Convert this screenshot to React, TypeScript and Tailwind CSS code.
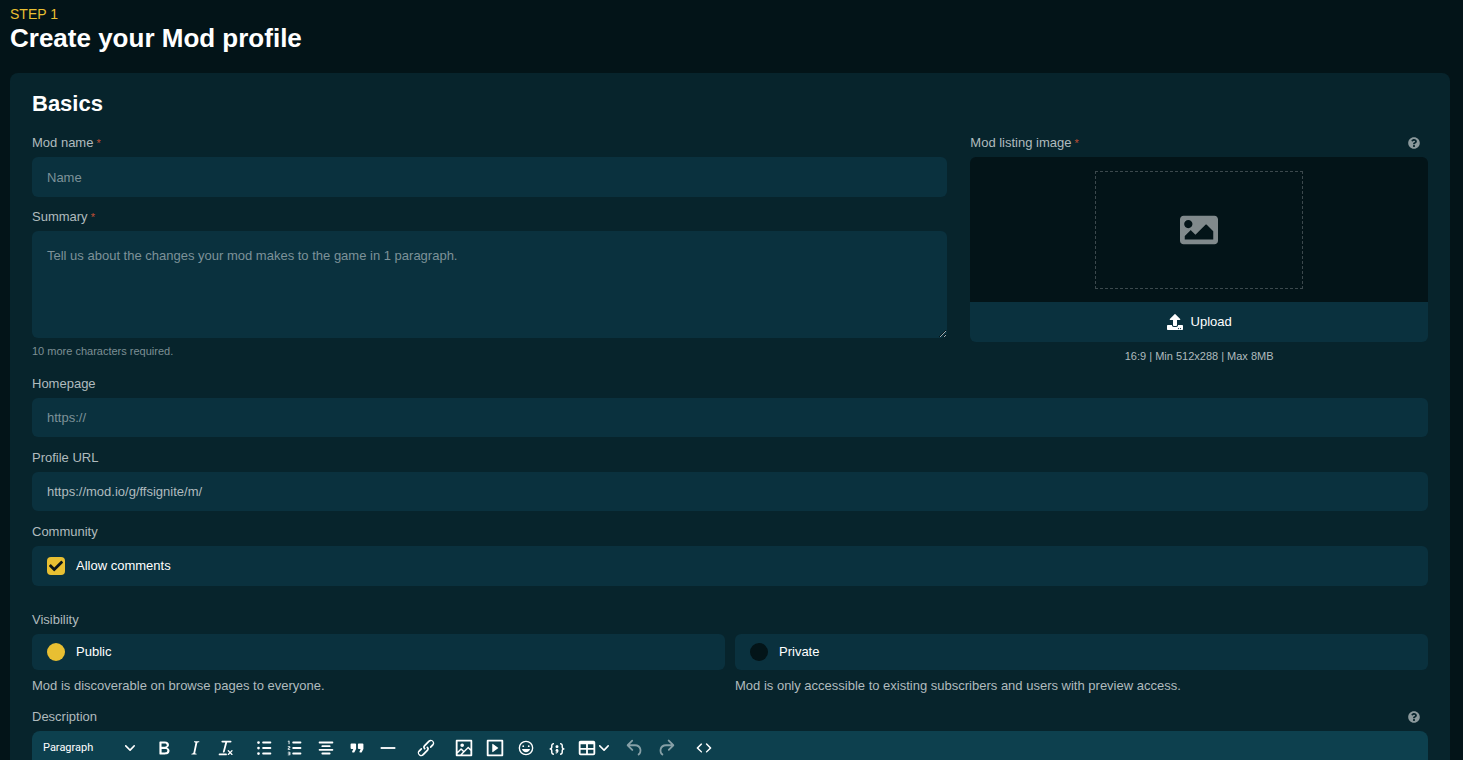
import { useState } from "react";
import type { ReactNode } from "react";
import { FaCheck, FaImage, FaQuestionCircle, FaUpload } from "react-icons/fa";

type Tool = { name: string; path: string; disabled?: boolean };

const textTools: Tool[] = [
    {
        name: "Bold",
        path: "M7.8 19c-.3 0-.5 0-.6-.2l-.2-.5V5.7c0-.2 0-.4.2-.5l.6-.2h5c1.5 0 2.7.3 3.5 1 .7.6 1.1 1.4 1.1 2.5a3 3 0 01-.6 1.9c-.4.6-1 1-1.6 1.2.4.1.9.3 1.3.6s.8.7 1 1.2c.4.4.5 1 .5 1.6 0 1.3-.4 2.3-1.3 3-.8.7-2.1 1-3.8 1H7.8zm5-8.3c.6 0 1.2-.1 1.6-.5.4-.3.6-.7.6-1.3 0-1.1-.8-1.7-2.3-1.7H9.3v3.5h3.4zm.5 6c.7 0 1.3-.1 1.7-.4.4-.4.6-.9.6-1.5s-.2-1-.7-1.4c-.4-.3-1-.4-2-.4H9.4v3.8h4z",
    },
    {
        name: "Italic",
        path: "M16.7 4.7l-.1.9h-.3c-.6 0-1 0-1.4.3-.3.3-.4.6-.5 1.1l-2.1 9.8v.6c0 .5.4.8 1.4.8h.2l-.2.8H8l.2-.8h.2c1.1 0 1.8-.5 2-1.5l2-9.8.1-.5c0-.6-.4-.8-1.4-.8h-.3l.2-.9h5.8z",
    },
    {
        name: "Clear formatting",
        path: "M13.2 6a1 1 0 010 .2l-2.6 10a1 1 0 01-1 .8h-.2a.8.8 0 01-.8-1l2.6-10H8a1 1 0 110-2h9a1 1 0 010 2h-3.8zM5 18h7a1 1 0 010 2H5a1 1 0 010-2zm13 1.5L16.5 18 15 19.5a.7.7 0 01-1-1l1.5-1.5-1.5-1.5a.7.7 0 011-1l1.5 1.5 1.5-1.5a.7.7 0 011 1L17.5 17l1.5 1.5a.7.7 0 01-1 1z",
    },
];

const blockTools: Tool[] = [
    {
        name: "Bullet list",
        path: "M11 5h8c.6 0 1 .4 1 1s-.4 1-1 1h-8a1 1 0 010-2zm0 6h8c.6 0 1 .4 1 1s-.4 1-1 1h-8a1 1 0 010-2zm0 6h8c.6 0 1 .4 1 1s-.4 1-1 1h-8a1 1 0 010-2zM4.5 6a1.5 1.5 0 103 0 1.5 1.5 0 00-3 0zm0 6a1.5 1.5 0 103 0 1.5 1.5 0 00-3 0zm0 6a1.5 1.5 0 103 0 1.5 1.5 0 00-3 0z",
    },
    {
        name: "Numbered list",
        path: "M10 17h8c.6 0 1 .4 1 1s-.4 1-1 1h-8a1 1 0 010-2zm0-6h8c.6 0 1 .4 1 1s-.4 1-1 1h-8a1 1 0 010-2zm0-6h8c.6 0 1 .4 1 1s-.4 1-1 1h-8a1 1 0 110-2zM6 4v3.5c0 .3-.2.5-.5.5a.5.5 0 01-.5-.5V5h-.5a.5.5 0 010-1H6zm-1 8.8l.2.2h1.3c.3 0 .5.2.5.5s-.2.5-.5.5H4.9a1 1 0 01-.9-1V13c0-.4.3-.8.6-1l1.2-.4.2-.3a.2.2 0 00-.2-.2H4.5a.5.5 0 01-.5-.5c0-.3.2-.5.5-.5h1.6c.5 0 .9.4.9 1v.1c0 .4-.3.8-.6 1l-1.2.4-.2.3zM7 17v2c0 .6-.4 1-1 1H4.5a.5.5 0 010-1h1.2c.2 0 .3-.1.3-.3 0-.2-.1-.3-.3-.3H4.4a.4.4 0 110-.8h1.3c.2 0 .3-.1.3-.3 0-.2-.1-.3-.3-.3H4.5a.5.5 0 110-1H6c.6 0 1 .4 1 1z",
    },
    {
        name: "Align center",
        path: "M5 5h14c.6 0 1 .4 1 1s-.4 1-1 1H5a1 1 0 110-2zm3 4h8c.6 0 1 .4 1 1s-.4 1-1 1H8a1 1 0 110-2zm0 8h8c.6 0 1 .4 1 1s-.4 1-1 1H8a1 1 0 010-2zm-3-4h14c.6 0 1 .4 1 1s-.4 1-1 1H5a1 1 0 010-2z",
    },
    {
        name: "Blockquote",
        path: "M7.5 17h.9c.4 0 .7-.2.9-.6L11 13V8c0-.6-.4-1-1-1H6a1 1 0 00-1 1v4c0 .6.4 1 1 1h2l-1.3 2.7a1 1 0 00.8 1.3zm8 0h.9c.4 0 .7-.2.9-.6L19 13V8c0-.6-.4-1-1-1h-4a1 1 0 00-1 1v4c0 .6.4 1 1 1h2l-1.3 2.7a1 1 0 00.8 1.3z",
    },
    { name: "Horizontal line", path: "M4 11h16v2H4z" },
];

const linkTools: Tool[] = [
    {
        name: "Insert link",
        path: "M6.2 12.3a1 1 0 011.4 1.4l-2.1 2a2 2 0 102.7 2.8l4.8-4.8a1 1 0 000-1.4 1 1 0 111.4-1.3 2.9 2.9 0 010 4L9.6 20a3.9 3.9 0 01-5.5-5.5l2-2zm11.6-.6a1 1 0 01-1.4-1.4l2-2a2 2 0 10-2.6-2.8L11 10.3a1 1 0 000 1.4A1 1 0 119.6 13a2.9 2.9 0 010-4L14.4 4a3.9 3.9 0 015.5 5.5l-2 2z",
    },
];

const mediaTools: Tool[] = [
    {
        name: "Insert image",
        path: "M5 15.7l3.3-3.2c.3-.3.7-.3 1 0L12 15l4.1-4c.3-.4.8-.4 1 0l2 1.9V5H5v10.7zM5 18V19h3l2.8-2.9-2-2L5 17.9zm14-3l-2.5-2.4-6.4 6.5H19v-4zM4 3h16c.6 0 1 .4 1 1v16c0 .6-.4 1-1 1H4a1 1 0 01-1-1V4c0-.6.4-1 1-1zm6 8a2 2 0 100-4 2 2 0 000 4z",
    },
    {
        name: "Insert media",
        path: "M4 3h16c.6 0 1 .4 1 1v16c0 .6-.4 1-1 1H4a1 1 0 01-1-1V4c0-.6.4-1 1-1zm1 2v14h14V5H5zm4.8 2.6l5.6 4a.5.5 0 010 .8l-5.6 4A.5.5 0 019 16V8a.5.5 0 01.8-.4z",
    },
    {
        name: "Emojis",
        path: "M9 11c.6 0 1-.4 1-1s-.4-1-1-1a1 1 0 00-1 1c0 .6.4 1 1 1zm6 0c.6 0 1-.4 1-1s-.4-1-1-1a1 1 0 00-1 1c0 .6.4 1 1 1zm-3 5.5c2.1 0 4-1.5 4.4-3.5H7.6c.5 2 2.3 3.5 4.4 3.5zM12 4a8 8 0 100 16 8 8 0 000-16zm0 14.5a6.5 6.5 0 110-13 6.5 6.5 0 010 13z",
    },
    {
        name: "Code sample",
        path: "M7.1 11a2.8 2.8 0 01-.8 2 2.8 2.8 0 01.8 2v1.7c0 .3.1.6.4.8.2.3.5.4.8.4.3 0 .4.2.4.4v.8c0 .2-.1.4-.4.4-.7 0-1.4-.3-2-.8-.5-.6-.8-1.3-.8-2V15c0-.3-.1-.6-.4-.8-.2-.3-.5-.4-.8-.4a.4.4 0 01-.4-.4v-.8c0-.2.2-.4.4-.4.3 0 .6-.1.8-.4.3-.2.4-.5.4-.8V9.3c0-.7.3-1.4.8-2 .6-.5 1.3-.8 2-.8.3 0 .4.2.4.4v.8c0 .2-.1.4-.4.4-.3 0-.6.1-.8.4-.3.2-.4.5-.4.8V11zm9.8 0V9.3c0-.3-.1-.6-.4-.8-.2-.3-.5-.4-.8-.4a.4.4 0 01-.4-.4V7c0-.2.1-.4.4-.4.7 0 1.4.3 2 .8.5.6.8 1.3.8 2V11c0 .3.1.6.4.8.2.3.5.4.8.4.2 0 .4.2.4.4v.8c0 .2-.2.4-.4.4-.3 0-.6.1-.8.4-.3.2-.4.5-.4.8v1.7c0 .7-.3 1.4-.8 2-.6.5-1.3.8-2 .8a.4.4 0 01-.4-.4v-.8c0-.2.1-.4.4-.4.3 0 .6-.1.8-.4.3-.2.4-.5.4-.8V15a2.8 2.8 0 01.8-2 2.8 2.8 0 01-.8-2zm-3.3-.4c0 .4-.1.8-.5 1.1-.3.3-.7.5-1.1.5-.4 0-.8-.2-1.1-.5-.4-.3-.5-.7-.5-1.1 0-.5.1-.9.5-1.2.3-.3.7-.4 1.1-.4.4 0 .8.1 1.1.4.4.3.5.7.5 1.2zM12 13c.4 0 .8.1 1.1.5.4.3.5.7.5 1.1 0 1-.1 1.6-.5 2a3 3 0 01-1.1 1c-.4.3-.8.4-1.1.4a.5.5 0 01-.5-.5V17a3 3 0 001-.2l.6-.6c-.6 0-1-.2-1.3-.5-.2-.3-.3-.7-.3-1 0-.5.1-1 .5-1.2.3-.4.7-.5 1.1-.5z",
    },
];

const tablePath =
    "M19 4a2 2 0 012 2v12a2 2 0 01-2 2H5a2 2 0 01-2-2V6c0-1.1.9-2 2-2h14zM5 14v4h6v-4H5zm14 0h-6v4h6v-4zm0-6h-6v4h6V8zM5 12h6V8H5v4z";

const historyTools: Tool[] = [
    {
        name: "Undo",
        disabled: true,
        path: "M6.4 8H12c3.7 0 6.2 2 6.8 5.1.6 2.7-.4 5.6-2.3 6.8a1 1 0 01-1-1.8c1.1-.6 1.8-2.7 1.4-4.6-.5-2.1-2.1-3.5-4.9-3.5H6.4l3.3 3.3a1 1 0 11-1.4 1.4l-5-5a1 1 0 010-1.4l5-5a1 1 0 011.4 1.4L6.4 8z",
    },
    {
        name: "Redo",
        disabled: true,
        path: "M17.6 10H12c-2.8 0-4.4 1.4-4.9 3.5-.4 2 .3 4 1.4 4.6a1 1 0 11-1 1.8c-2-1.2-2.9-4.1-2.3-6.8.6-3 3-5.1 6.8-5.1h5.6l-3.3-3.3a1 1 0 111.4-1.4l5 5a1 1 0 010 1.4l-5 5a1 1 0 01-1.4-1.4l3.3-3.3z",
    },
];

const sourceTools: Tool[] = [
    {
        name: "Source code",
        path: "M9.8 15.7c.3.3.3.8 0 1-.3.4-.9.4-1.2 0l-4.4-4.1a.8.8 0 010-1.2l4.4-4.2c.3-.3.9-.3 1.2 0 .3.3.3.8 0 1.1L6 12l3.8 3.7zM14.2 15.7c-.3.3-.3.8 0 1 .4.4.9.4 1.2 0l4.4-4.1c.3-.3.3-.9 0-1.2l-4.4-4.2a.8.8 0 00-1.2 0c-.3.3-.3.8 0 1.1L18 12l-3.8 3.7z",
    },
];

const visibilityOptions = [
    {
        value: "public",
        label: "Public",
        description: "Mod is discoverable on browse pages to everyone.",
    },
    {
        value: "private",
        label: "Private",
        description: "Mod is only accessible to existing subscribers and users with preview access.",
    },
];

const fieldClass =
    "block w-full rounded-md bg-[#0a313e] px-[15px] text-[13px] leading-5 text-[#b0bbbe] placeholder:text-[#7d9299] outline-none";

function Chevron() {
    return (
        <svg viewBox="0 0 10 10" className="pointer-events-none size-[10px] fill-current" aria-hidden="true">
            <path d="M8.7 2.2c.3-.3.8-.3 1 0 .4.4.4.9 0 1.2L5.7 7.8c-.3.3-.9.3-1.2 0L.2 3.4a.8.8 0 010-1.2c.3-.3.8-.3 1.1 0L5 6l3.7-3.8z" />
        </svg>
    );
}

function ToolIcon({ path }: { path: string }) {
    return (
        <svg viewBox="0 0 24 24" className="size-[22px] shrink-0 fill-current" fillRule="evenodd" aria-hidden="true">
            <path d={path} />
        </svg>
    );
}

function ToolGroup({ tools, children }: { tools: Tool[]; children?: ReactNode }) {
    return (
        <div className="flex">
            {tools.map((tool) => (
                <button
                    key={tool.name}
                    type="button"
                    title={tool.name}
                    aria-label={tool.name}
                    disabled={tool.disabled}
                    className="flex h-8 w-[31px] items-center justify-center disabled:opacity-50"
                >
                    <ToolIcon path={tool.path} />
                </button>
            ))}
            {children}
        </div>
    );
}

function FieldLabel({ htmlFor, required, children }: { htmlFor: string; required?: boolean; children: ReactNode }) {
    return (
        <label htmlFor={htmlFor} className="mb-1 block text-[13px] leading-5 text-[#b0bbbe]">
            {children}
            {required && <span className="ml-[3px] text-[11px] text-[#c04f36]">*</span>}
        </label>
    );
}

function HelpButton({ label }: { label: string }) {
    return (
        <button type="button" aria-label={label} className="mb-1 mr-2 text-[#8b999c]">
            <FaQuestionCircle className="size-3" />
        </button>
    );
}

export default function App() {
    const [allowComments, setAllowComments] = useState(true);
    const [visibility, setVisibility] = useState("public");

    return (
        <div className="h-screen overflow-hidden bg-[#031418] pl-[10px] pr-[13px] pt-1 font-['Liberation_Sans',Arial,sans-serif] text-white">
            <header className="mb-5">
                <p className="text-sm leading-5 text-[#e8bf32]">STEP 1</p>
                <h1 className="text-[26px] font-bold leading-[29px]">Create your Mod profile</h1>
            </header>

            <form className="rounded-lg bg-[#07242c] px-[22px] pb-6 pt-[17px]">
                <h2 className="mb-[15px] text-[22px] font-bold leading-7">Basics</h2>

                <div className="grid grid-cols-[2fr_1fr] gap-[23px]">
                    <div>
                        <FieldLabel htmlFor="name" required>Mod name</FieldLabel>
                        <input id="name" type="text" placeholder="Name" className={`${fieldClass} h-10`} />

                        <div className="mt-[10px]">
                            <FieldLabel htmlFor="summary" required>Summary</FieldLabel>
                            <textarea
                                id="summary"
                                placeholder="Tell us about the changes your mod makes to the game in 1 paragraph."
                                className={`${fieldClass} h-[107px] resize-y py-[15px]`}
                            />
                            <p className="mt-1 text-[11px] leading-[18px] text-[#7d8f94]">10 more characters required.</p>
                        </div>
                    </div>

                    <div>
                        <div className="flex items-center justify-between">
                            <FieldLabel htmlFor="image" required>Mod listing image</FieldLabel>
                            <HelpButton label="About the listing image" />
                        </div>
                        <div className="overflow-hidden rounded-md">
                            <div className="flex h-[145px] items-center justify-center bg-[#031418]">
                                <div className="flex h-[118px] w-[208px] items-center justify-center border border-dashed border-[#3c494d] text-[#818a8c]">
                                    <FaImage className="size-[38px]" />
                                </div>
                            </div>
                            <button
                                id="image"
                                type="button"
                                className="flex h-10 w-full items-center justify-center gap-2 bg-[#0a313e] text-[13px] font-medium text-white"
                            >
                                <FaUpload className="size-4" />
                                Upload
                            </button>
                        </div>
                        <p className="mt-1 text-center text-[11px] leading-5 text-[#b0bbbe]">16:9 | Min 512x288 | Max 8MB</p>
                    </div>
                </div>

                <div className="mt-2">
                    <FieldLabel htmlFor="homepage">Homepage</FieldLabel>
                    <input id="homepage" type="url" placeholder="https://" className={`${fieldClass} h-[39px]`} />
                </div>

                <div className="mt-[11px]">
                    <FieldLabel htmlFor="profile">Profile URL</FieldLabel>
                    <input id="profile" type="url" defaultValue="https://mod.io/g/ffsignite/m/" className={`${fieldClass} h-[39px]`} />
                </div>

                <div className="mt-[11px]">
                    <FieldLabel htmlFor="comments">Community</FieldLabel>
                    <label className="flex h-10 items-center gap-[11px] rounded-md bg-[#0a313e] px-[15px] text-[13px]">
                        <span className="relative flex size-[18px] items-center justify-center">
                            <input
                                id="comments"
                                type="checkbox"
                                checked={allowComments}
                                onChange={(e) => setAllowComments(e.target.checked)}
                                className="size-[18px] appearance-none rounded bg-[#031418] checked:bg-[#e8bf32]"
                            />
                            {allowComments && <FaCheck className="pointer-events-none absolute size-[14px] text-[#0b1519]" />}
                        </span>
                        Allow comments
                    </label>
                </div>

                <fieldset className="mt-6">
                    <legend className="mb-1 text-[13px] leading-5 text-[#b0bbbe]">Visibility</legend>
                    <div className="grid grid-cols-2 gap-[10px]">
                        {visibilityOptions.map((option) => (
                            <div key={option.value}>
                                <label className="flex h-9 items-center gap-[11px] rounded-md bg-[#0a313e] px-[15px] text-[13px]">
                                    <input
                                        type="radio"
                                        name="visibility"
                                        value={option.value}
                                        checked={visibility === option.value}
                                        onChange={() => setVisibility(option.value)}
                                        className="size-[18px] appearance-none rounded-full bg-[#031418] checked:bg-[#e8bf32]"
                                    />
                                    {option.label}
                                </label>
                                <p className="mt-[6px] text-[13px] leading-5 text-[#b0bbbe]">{option.description}</p>
                            </div>
                        ))}
                    </div>
                </fieldset>

                <div className="mt-[11px]">
                    <div className="flex items-center justify-between">
                        <FieldLabel htmlFor="block-format">Description</FieldLabel>
                        <HelpButton label="About the description" />
                    </div>
                    <div className="flex h-[60px] items-start gap-[7px] rounded-t-lg bg-[#0d404e] pl-1 pt-px">
                        <div className="relative flex h-8 w-[105px] items-center">
                            <select
                                id="block-format"
                                className="h-8 w-full appearance-none bg-transparent pl-[7px] font-[Roboto,sans-serif] text-[11px]"
                            >
                                <option>Paragraph</option>
                                <option>Heading 1</option>
                                <option>Heading 2</option>
                            </select>
                            <span className="pointer-events-none absolute right-[6px]">
                                <Chevron />
                            </span>
                        </div>
                        <ToolGroup tools={textTools} />
                        <ToolGroup tools={blockTools} />
                        <ToolGroup tools={linkTools} />
                        <ToolGroup tools={mediaTools}>
                            <button type="button" aria-label="Table" className="flex h-8 w-10 items-center justify-center gap-px">
                                <ToolIcon path={tablePath} />
                                <Chevron />
                            </button>
                        </ToolGroup>
                        <ToolGroup tools={historyTools} />
                        <ToolGroup tools={sourceTools} />
                    </div>
                </div>
            </form>
        </div>
    );
}
